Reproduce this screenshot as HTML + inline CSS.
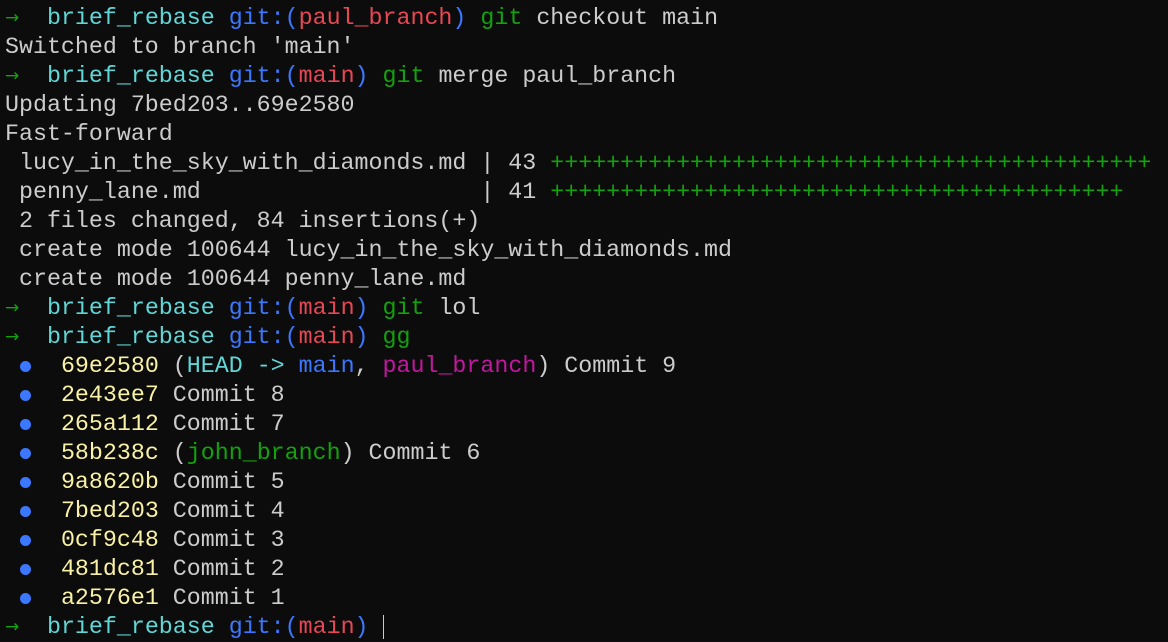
<!DOCTYPE html>
<html><head><meta charset="utf-8"><style>
html,body{margin:0;padding:0;background:#0c0c0c;width:1168px;height:619px;overflow:hidden}
pre{margin:0;position:absolute;left:5px;top:4px;font-family:"Liberation Mono","DejaVu Sans Mono",monospace;font-size:23.3px;line-height:29px;color:#cccccc;white-space:pre}
.a{color:#13a10e;display:inline-block;width:14px;font-family:"DejaVu Sans",sans-serif;font-size:17px;line-height:29px;vertical-align:top}
.c{color:#61d6d6}.b{color:#3b78ff}.r{color:#e74856}.g{color:#13a10e}.y{color:#f9f1a5}.m{color:#c0189e}
.d{display:inline-block;width:14px;height:29px;vertical-align:top;position:relative}
.d::after{content:"";position:absolute;left:1px;top:9px;width:11px;height:11px;border-radius:50%;background:#3b78ff}
.cur{display:inline-block;width:1px;height:24px;background:#ccc;vertical-align:middle}
</style></head><body><pre><span class="a">→</span>  <span class="c">brief_rebase</span> <span class="b">git:(</span><span class="r">paul_branch</span><span class="b">)</span> <span class="g">git</span> checkout main
Switched to branch 'main'
<span class="a">→</span>  <span class="c">brief_rebase</span> <span class="b">git:(</span><span class="r">main</span><span class="b">)</span> <span class="g">git</span> merge paul_branch
Updating 7bed203..69e2580
Fast-forward
 lucy_in_the_sky_with_diamonds.md | 43 <span class="g">+++++++++++++++++++++++++++++++++++++++++++</span>
 penny_lane.md                    | 41 <span class="g">+++++++++++++++++++++++++++++++++++++++++</span>
 2 files changed, 84 insertions(+)
 create mode 100644 lucy_in_the_sky_with_diamonds.md
 create mode 100644 penny_lane.md
<span class="a">→</span>  <span class="c">brief_rebase</span> <span class="b">git:(</span><span class="r">main</span><span class="b">)</span> <span class="g">git</span> lol
<span class="a">→</span>  <span class="c">brief_rebase</span> <span class="b">git:(</span><span class="r">main</span><span class="b">)</span> <span class="g">gg</span>
 <span class="d"></span>  <span class="y">69e2580</span> (<span class="c">HEAD -&gt; </span><span class="b">main</span>, <span class="m">paul_branch</span>) Commit 9
 <span class="d"></span>  <span class="y">2e43ee7</span> Commit 8
 <span class="d"></span>  <span class="y">265a112</span> Commit 7
 <span class="d"></span>  <span class="y">58b238c</span> (<span class="g">john_branch</span>) Commit 6
 <span class="d"></span>  <span class="y">9a8620b</span> Commit 5
 <span class="d"></span>  <span class="y">7bed203</span> Commit 4
 <span class="d"></span>  <span class="y">0cf9c48</span> Commit 3
 <span class="d"></span>  <span class="y">481dc81</span> Commit 2
 <span class="d"></span>  <span class="y">a2576e1</span> Commit 1
<span class="a">→</span>  <span class="c">brief_rebase</span> <span class="b">git:(</span><span class="r">main</span><span class="b">)</span> <span class="cur"></span></pre></body></html>
